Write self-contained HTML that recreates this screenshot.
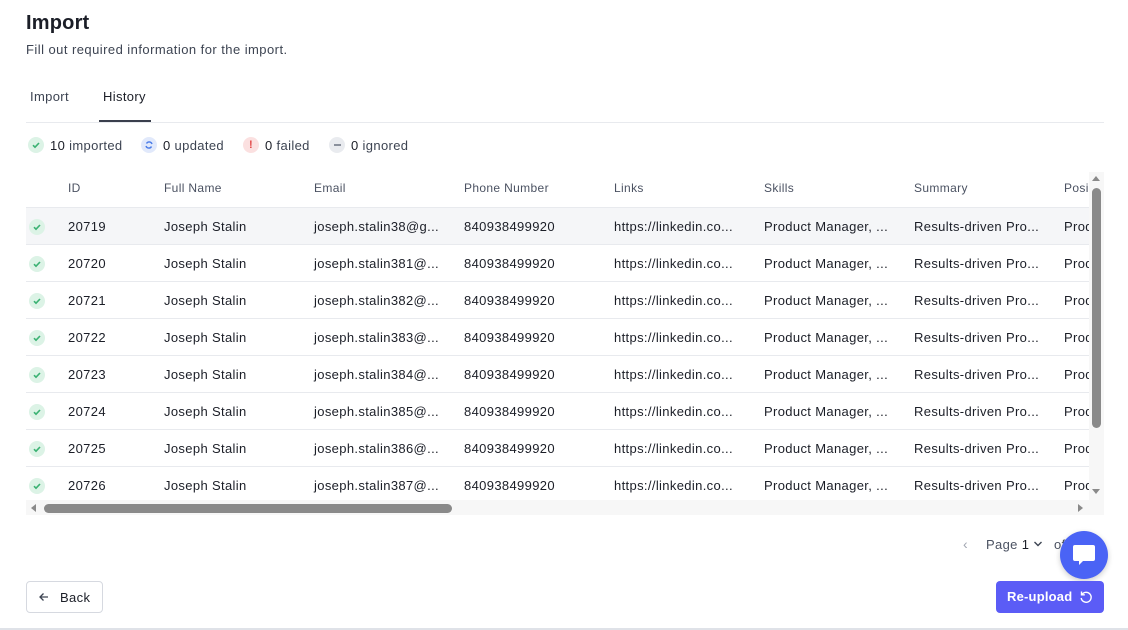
<!DOCTYPE html>
<html><head><style>
*{box-sizing:border-box;margin:0;padding:0}
body{width:1128px;height:630px;background:#fff;font-family:"Liberation Sans",sans-serif;color:#1f2330;position:relative;overflow:hidden;letter-spacing:.35px}
.a{position:absolute;white-space:nowrap}
h1{position:absolute;left:26px;top:12px;font-size:20px;font-weight:bold;color:#1b1e27;letter-spacing:.2px}
.sub{left:26px;top:42px;font-size:13px;color:#3d4452;letter-spacing:.45px}
.tab{top:89px;font-size:13px;color:#3d4452}
.ic{width:16px;height:16px;border-radius:50%;display:flex;align-items:center;justify-content:center}
.cnt{top:138px;font-size:13px;color:#3d4452}
.cnt b{font-weight:normal;color:#1b1e27}
.th{top:181px;font-size:12px;color:#4b5262}
.row{position:absolute;left:26px;width:1063px;height:37px;border-top:1px solid #e8eaee;font-size:13px;color:#1b1e27;overflow:hidden}
.row span{position:absolute;top:11px;white-space:nowrap}
.chk{position:absolute;left:3px;top:11px;width:16px;height:16px;border-radius:50%;background:#dcf3e6}
</style></head><body>
<h1>Import</h1>
<div class="a sub">Fill out required information for the import.</div>
<div class="a tab" style="left:30px">Import</div>
<div class="a tab" style="left:103px;color:#1b1e27">History</div>
<div class="a" style="left:99px;top:120px;width:52px;height:2px;background:#3a3f4d"></div>
<div class="a" style="left:26px;top:122px;width:1078px;height:1px;background:#e8eaee"></div>

<div class="a ic" style="left:28px;top:137px;background:#dcf3e6"><svg width="10" height="10" viewBox="0 0 10 10"><path d="M2 5.2l2 2L8 3" stroke="#3bb273" stroke-width="1.6" fill="none"/></svg></div>
<div class="a cnt" style="left:50px"><b>10</b> imported</div>
<div class="a ic" style="left:141px;top:137px;background:#e1e9fb"><svg width="10" height="10" viewBox="0 0 10 10"><path d="M8 4A3 3 0 0 0 2.5 3.5M2 6a3 3 0 0 0 5.5.5" stroke="#4a7ce8" stroke-width="1.4" fill="none"/></svg></div>
<div class="a cnt" style="left:163px"><b>0</b> updated</div>
<div class="a ic" style="left:243px;top:137px;background:#fbe0e0;color:#e24a4a;font-size:11px;font-weight:bold">!</div>
<div class="a cnt" style="left:265px"><b>0</b> failed</div>
<div class="a ic" style="left:329px;top:137px;background:#e9ebef"><div style="width:7px;height:1.5px;background:#8a909c"></div></div>
<div class="a cnt" style="left:351px"><b>0</b> ignored</div>

<div class="a th" style="left:68px">ID</div>
<div class="a th" style="left:164px">Full Name</div>
<div class="a th" style="left:314px">Email</div>
<div class="a th" style="left:464px">Phone Number</div>
<div class="a th" style="left:614px">Links</div>
<div class="a th" style="left:764px">Skills</div>
<div class="a th" style="left:914px">Summary</div>
<div class="a th" style="left:1064px">Posi</div>

<div id="rows"></div>
<script>
var h='';for(var i=0;i<8;i++){var y=207+i*37;h+='<div class="row" style="top:'+y+'px;'+(i==0?'background:#f5f6f8':'')+'"><div class="chk"><svg width="16" height="16" viewBox="0 0 16 16"><path d="M5 8.2l2 2L11 6" stroke="#3bb273" stroke-width="1.6" fill="none"/></svg></div><span style="left:42px">'+(20719+i)+'</span><span style="left:138px">Joseph Stalin</span><span style="left:288px">joseph.stalin38'+(i==0?'@g...':(i)+'@...')+'</span><span style="left:438px">840938499920</span><span style="left:588px">https://linkedin.co...</span><span style="left:738px">Product Manager, ...</span><span style="left:888px">Results-driven Pro...</span><span style="left:1038px">Product</span></div>';}
document.getElementById('rows').innerHTML=h;
</script>
<!-- scrollbars -->
<div class="a" style="left:1089px;top:172px;width:15px;height:328px;background:#f7f7f7"></div>
<div class="a" style="left:1092px;top:188px;width:9px;height:240px;border-radius:5px;background:#8a8a8a"></div>
<div class="a" style="left:1092px;top:176px;width:0;height:0;border-left:4px solid transparent;border-right:4px solid transparent;border-bottom:5px solid #8a8a8a"></div>
<div class="a" style="left:1092px;top:489px;width:0;height:0;border-left:4px solid transparent;border-right:4px solid transparent;border-top:5px solid #8a8a8a"></div>
<div class="a" style="left:26px;top:500px;width:1078px;height:15px;background:#f7f7f7"></div>
<div class="a" style="left:44px;top:504px;width:408px;height:9px;border-radius:5px;background:#8a8a8a"></div>
<div class="a" style="left:31px;top:504px;width:0;height:0;border-top:4px solid transparent;border-bottom:4px solid transparent;border-right:5px solid #8a8a8a"></div>
<div class="a" style="left:1078px;top:504px;width:0;height:0;border-top:4px solid transparent;border-bottom:4px solid transparent;border-left:5px solid #8a8a8a"></div>

<div class="a" style="left:963px;top:536px;font-size:14px;color:#a0a5b0">‹</div>
<div class="a" style="left:986px;top:537px;font-size:13px;color:#4b5262">Page <span style="color:#1b1e27">1</span></div>
<svg class="a" style="left:1033px;top:540px" width="10" height="8" viewBox="0 0 10 8"><path d="M1.5 2l3.5 3.5L8.5 2" stroke="#3d4452" stroke-width="1.4" fill="none"/></svg>
<div class="a" style="left:1054px;top:537px;font-size:13px;color:#4b5262">of</div>
<div class="a" style="left:1060px;top:531px;width:48px;height:48px;border-radius:50%;background:#4a63f5;box-shadow:0 2px 6px rgba(0,0,0,.2)"></div>
<svg class="a" style="left:1071px;top:542px" width="26" height="26" viewBox="0 0 26 26"><path d="M4 3h18a2 2 0 0 1 2 2v12a2 2 0 0 1-2 2H12l-4 4v-4H4a2 2 0 0 1-2-2V5a2 2 0 0 1 2-2z" fill="#fff"/></svg>

<div class="a" style="left:26px;top:581px;width:77px;height:32px;border:1px solid #d6d9e0;border-radius:4px;font-size:13px;color:#1b1e27;padding:8px 0 0 33px">Back</div>
<svg class="a" style="left:38px;top:591px" width="12" height="12" viewBox="0 0 12 12"><path d="M10 6H2M5.5 2.5L2 6l3.5 3.5" stroke="#3d4452" stroke-width="1.3" fill="none"/></svg>
<div class="a" style="left:996px;top:581px;width:108px;height:32px;border-radius:4px;background:#5b5cf6;color:#fff;font-size:13px;font-weight:bold;padding:8px 0 0 11px;letter-spacing:.2px">Re-upload</div>
<svg class="a" style="left:1079px;top:590px" width="14" height="14" viewBox="0 0 14 14"><path d="M3 4.5A5 5 0 1 1 2.2 8" stroke="#fff" stroke-width="1.4" fill="none"/><path d="M2.5 1.5v3.3h3.3" stroke="#fff" stroke-width="1.4" fill="none"/></svg>
<div class="a" style="left:0;top:628px;width:1128px;height:2px;background:#dfe2e8"></div>
</body></html>
